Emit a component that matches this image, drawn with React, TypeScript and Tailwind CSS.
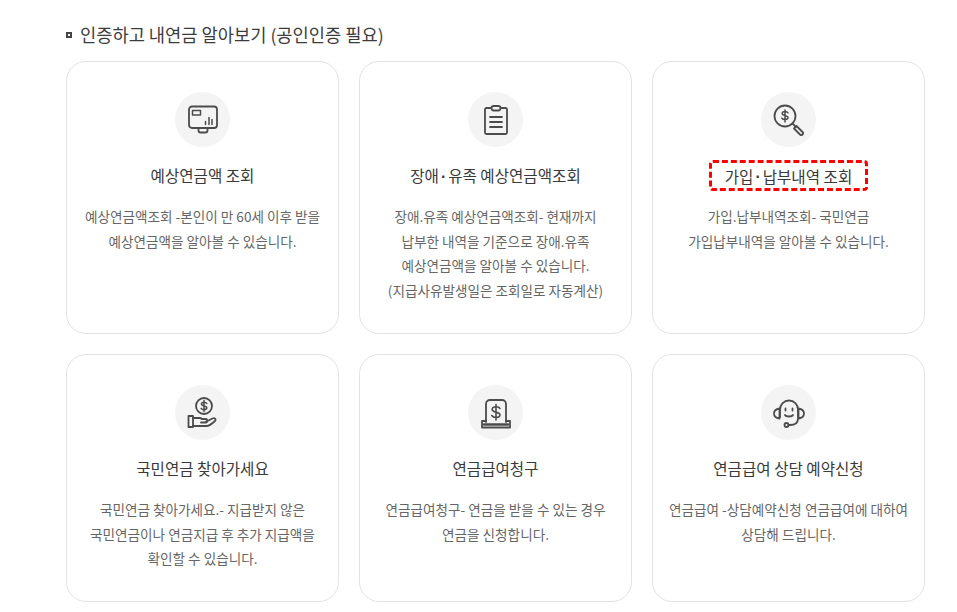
import React from "react";

const S = { fill: "none", stroke: "#4c4c4c", strokeWidth: 1.8, strokeLinecap: "round" as const, strokeLinejoin: "round" as const };

const Monitor = () => (
  <svg width="32" height="32" viewBox="0 0 32 32" {...S}>
    <rect x="2" y="2.500" width="28" height="21.500" rx="3" />
    <rect x="5.500" y="6.500" width="8" height="4.500" strokeWidth="1.500" />
    <path d="M18.500 20.500v-3M22 20.500v-7M25 20.500v-5" strokeWidth="1.500" />
    <path d="M11.500 24v2.500a2 2 0 0 0 2 2h5a2 2 0 0 0 2-2V24" />
  </svg>
);
const Clipboard = () => (
  <svg width="32" height="32" viewBox="0 0 32 32" {...S}>
    <path d="M11 4H6.500A1.500 1.500 0 0 0 5 5.500v23A1.500 1.500 0 0 0 6.500 30h19a1.500 1.500 0 0 0 1.500-1.500v-23A1.500 1.500 0 0 0 25.500 4H21" />
    <rect x="11.500" y="2" width="9" height="4.500" rx="2.200" />
    <path d="M10 13h12M10 18h12M10 23h12" />
  </svg>
);
const Search = () => (
  <svg width="32" height="32" viewBox="0 0 32 32" {...S}>
    <circle cx="12" cy="12" r="10.500" />
    <path d="M19.500 19.500l2.500 2.500M21 24.500l2.500-2.500 6 6a1.700 1.700 0 0 1-2.500 2.500z" />
    <path d="M15 8.800c-.5-.8-1.500-1.200-3-1.200-1.700 0-2.800.8-2.800 2 0 2.800 5.800 1.300 5.800 4 0 1.200-1.200 2-3 2-1.500 0-2.600-.5-3.200-1.500M12 6v12" strokeWidth="1.500" />
  </svg>
);
const Hand = () => (
  <svg width="32" height="32" viewBox="0 0 32 32" {...S}>
    <circle cx="17" cy="9" r="8" />
    <path d="M19.800 6.500c-.5-.9-1.400-1.300-2.800-1.300-1.600 0-2.600.7-2.600 1.900 0 2.500 5.400 1.200 5.400 3.700 0 1.100-1.100 1.900-2.800 1.900-1.400 0-2.400-.5-2.900-1.400M17 3.500v11" strokeWidth="1.500" />
    <rect x="1.500" y="19" width="4.500" height="11" />
    <path d="M6 21h6.500c1 0 1.800.3 2.500 1h3.500a1.500 1.500 0 0 1 0 3.500H14M18.500 25l7-3.500c2.500-1 4 1 2.500 2.500-3 2.800-6 5-8.500 5H6" />
  </svg>
);
const Grave = () => (
  <svg width="32" height="32" viewBox="0 0 32 32" {...S}>
    <path d="M6 25V7a4 4 0 0 1 4-4h12a4 4 0 0 1 4 4v18" />
    <path d="M6 24H2v6.500h28V24h-4" />
    <path d="M4 27.500h24" strokeWidth="2.400" />
    <path d="M20 11.500c-.6-1.100-1.900-1.700-4-1.700-2.400 0-3.800 1.100-3.800 2.700 0 3.700 7.800 1.700 7.800 5.300 0 1.600-1.600 2.700-4 2.700-2.100 0-3.500-.7-4.200-2M16 7.500v15.500" strokeWidth="1.600" />
  </svg>
);
const Head = () => (
  <svg width="32" height="32" viewBox="0 0 32 32" {...S}>
    <path d="M7 20V12.500a9 9 0 0 1 18 0V20" />
    <path d="M6.500 11.500C3.500 12 1 14 1 16.500s2.500 4.500 5.500 5V11.500zM25.500 11.500c3 .5 5.500 2.500 5.500 5s-2.500 4.500-5.500 5z" />
    <path d="M12.500 11.500v2M19.500 11.500v2M12 18c1 2 7 2 8 0" />
    <path d="M25 21.500c0 4-3 6.500-8 6.500h-1.500" />
    <circle cx="13.500" cy="28" r="2" />
  </svg>
);

type Item = { icon: React.ReactNode; title: React.ReactNode; key: string; lines: string[]; mark?: boolean };

const Dot = () => <span className="mx-[2px] font-['Liberation_Sans'] font-bold">·</span>;

const items: Item[] = [
  { key: "a", icon: <Monitor />, title: "예상연금액 조회", lines: ["예상연금액조회 -본인이 만 60세 이후 받을", "예상연금액을 알아볼 수 있습니다."] },
  { key: "b", icon: <Clipboard />, title: <>장애<Dot />유족 예상연금액조회</>, lines: ["장애.유족 예상연금액조회- 현재까지", "납부한 내역을 기준으로 장애.유족", "예상연금액을 알아볼 수 있습니다.", "(지급사유발생일은 조회일로 자동계산)"] },
  { key: "c", icon: <Search />, title: <>가입<Dot />납부내역 조회</>, mark: true, lines: ["가입.납부내역조회- 국민연금", "가입납부내역을 알아볼 수 있습니다."] },
  { key: "d", icon: <Hand />, title: "국민연금 찾아가세요", lines: ["국민연금 찾아가세요.- 지급받지 않은", "국민연금이나 연금지급 후 추가 지급액을", "확인할 수 있습니다."] },
  { key: "e", icon: <Grave />, title: "연금급여청구", lines: ["연금급여청구- 연금을 받을 수 있는 경우", "연금을 신청합니다."] },
  { key: "f", icon: <Head />, title: "연금급여 상담 예약신청", lines: ["연금급여 -상담예약신청 연금급여에 대하여", "상담해 드립니다."] },
];

function Card({ item }: { item: Item }) {
  return (
    <div className="flex flex-col items-center rounded-[20px] border border-[#e3e3e3] bg-white px-2 pt-[30px]">
      <div className="flex h-[55px] w-[55px] items-center justify-center rounded-full bg-[#f4f4f4]">
        <div className="flex h-[32px] w-[32px] items-center justify-center">{item.icon}</div>
      </div>
      <div className="mt-[13px] flex h-[32px] items-center justify-center">
        <span className={item.mark
          ? "flex h-[31px] w-[159px] self-start items-center justify-center rounded-[4px] border-[3px] border-dashed border-[#f00] pt-[2px] text-[15.600px] font-normal text-[#3a3a3a]"
          : "text-[15.600px] font-normal text-[#3a3a3a]"}>
          {item.title}
        </span>
      </div>
      <div className="mt-[12px] text-center text-[13.600px] leading-[24.700px] text-[#666]">
        {item.lines.map((l) => (
          <div key={l}>{l}</div>
        ))}
      </div>
    </div>
  );
}

export default function App() {
  return (
    <div className="h-[612px] w-[957px] overflow-hidden bg-white pl-[66px] pr-[32px] font-['Noto_Sans_CJK_KR','Noto_Sans',sans-serif]">
      <div className="flex h-[61px] items-start pt-[22px]">
        <h2 className="flex items-center text-[17.650px] font-normal leading-[26px] text-[#3c3c3c]">
          <span className="mr-[8px] h-[6px] w-[6px] border-2 border-[#444] bg-white" />
          인증하고 내연금 알아보기 (공인인증 필요)
        </h2>
      </div>
      <div className="grid grid-cols-[273px_273px_273px] grid-rows-[273px_248px] gap-x-[20px] gap-y-[20px]">
        {items.map((it) => (
          <Card key={it.key} item={it} />
        ))}
      </div>
    </div>
  );
}
